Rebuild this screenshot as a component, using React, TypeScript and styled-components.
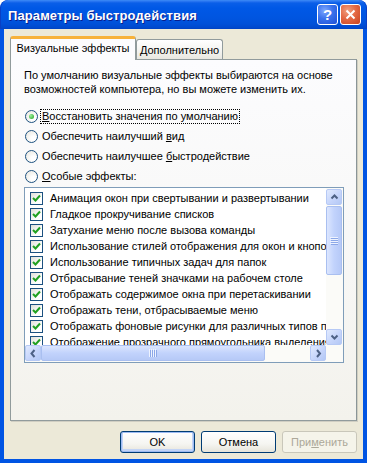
import React from "react";
import styled, { createGlobalStyle } from "styled-components";

const Global = createGlobalStyle`
  html, body { margin: 0; padding: 0; background: #ffffff; }
  body { font-family: "Liberation Sans", Arial, sans-serif; font-size: 11px; color: #000; }
`;

const Window = styled.div`
  width: 367px;
  height: 463px;
  display: flex;
  flex-direction: column;
  box-sizing: border-box;
  border-radius: 8px 8px 0 0;
  overflow: hidden;
  background: #0054e3;
`;

const TitleBar = styled.div`
  height: 29px;
  flex: none;
  display: flex;
  align-items: center;
  padding: 0 5px 0 7px;
  box-sizing: border-box;
  background: linear-gradient(
    to bottom,
    #3d8df5 0px,
    #2f7af3 1px,
    #0a5fe8 3px,
    #0058e6 8px,
    #0055e0 18px,
    #0050d8 24px,
    #0048cc 28px,
    #0040c0 29px
  );
  border-left: 1px solid #0a3fc4;
  border-right: 1px solid #0a3fc4;
  border-radius: 8px 8px 0 0;
`;

const Title = styled.div`
  flex: 1;
  color: #fff;
  font-family: "Liberation Sans", Arial, sans-serif;
  font-weight: bold;
  font-size: 13px;
  letter-spacing: 0.1px;
  text-shadow: 1px 1px 0 #0a1e8c;
  padding-top: 1px;
`;

const CaptionButton = styled.div<{ $kind: "help" | "close" }>`
  width: 21px;
  height: 21px;
  box-sizing: border-box;
  margin-left: 2px;
  border: 1px solid #fff;
  border-radius: 3px;
  display: flex;
  align-items: center;
  justify-content: center;
  background: ${(p) =>
    p.$kind === "close"
      ? "radial-gradient(circle at 35% 30%, #f0a080 0%, #e46a45 45%, #c8421f 100%)"
      : "radial-gradient(circle at 35% 30%, #7fa8ff 0%, #3a72ec 45%, #1e4fd6 100%)"};
  color: #fff;
  font-weight: bold;
  font-size: 15px;
`;

const Body = styled.div`
  flex: 1;
  display: flex;
  flex-direction: column;
  background: #ece9d8;
  margin: 0 4px 4px 4px;
  padding: 7px 6px 0 6px;
  box-sizing: border-box;
`;

const TabStrip = styled.div`
  display: flex;
  align-items: flex-end;
  height: 23px;
  position: relative;
  z-index: 2;
`;

const Tab = styled.div<{ $active?: boolean }>`
  box-sizing: border-box;
  font-size: 11px;
  display: flex;
  align-items: center;
  justify-content: center;
  border: 1px solid #919b9c;
  border-bottom: none;
  border-radius: 3px 3px 0 0;
  ${(p) =>
    p.$active
      ? `
    height: 24px;
    margin-bottom: -1px;
    width: 126px;
    background: #fcfcfe;
    border-top: 3px solid #f7b23b;
    padding-bottom: 3px;
  `
      : `
    height: 20px;
    width: 87px;
    background: linear-gradient(to bottom, #ffffff, #f3f3ef 60%, #e8e7e0);
    padding-top: 1px;
  `}
`;

const Panel = styled.div`
  width: 347px;
  height: 362px;
  box-sizing: border-box;
  border: 1px solid #919b9c;
  border-right-color: #8a9597;
  box-shadow: 1px 1px 0 #d0cec2;
  background: linear-gradient(to bottom, #fcfcfe 0%, #f7f7f5 60%, #f3f2ec 100%);
  padding: 8px 0 0 13px;
  display: flex;
  flex-direction: column;
`;

const Desc = styled.div`
  line-height: 14px;
  width: 330px;
  margin-bottom: 10px;
`;

const RadioRow = styled.div`
  height: 20px;
  display: flex;
  align-items: center;
  padding-left: 1px;
`;

const RadioCircle = styled.span<{ $checked?: boolean }>`
  width: 13px;
  height: 13px;
  box-sizing: border-box;
  border-radius: 50%;
  border: 1px solid #1c5180;
  background: radial-gradient(circle at 70% 70%, #ffffff 20%, #e6e5dc 100%);
  display: inline-flex;
  align-items: center;
  justify-content: center;
  margin-right: 2px;
  flex: none;
  &::after {
    content: "";
    display: ${(p) => (p.$checked ? "block" : "none")};
    width: 5px;
    height: 5px;
    border-radius: 50%;
    background: radial-gradient(circle at 35% 35%, #9cf09c, #21a121);
  }
`;

const Label = styled.span<{ $focus?: boolean }>`
  padding: 0 1px;
  border: 1px ${(p) => (p.$focus ? "dotted #000" : "solid transparent")};
  line-height: 13px;
`;

const U = styled.span`
  text-decoration: underline;
`;

const ListBox = styled.div`
  margin-top: 1px;
  width: 320px;
  height: 176px;
  box-sizing: border-box;
  border: 1px solid #7f9db9;
  background: #fff;
  display: grid;
  grid-template-columns: 1fr 17px;
  grid-template-rows: 1fr 17px;
`;

const Items = styled.div`
  overflow: hidden;
  padding: 2px 0 0 5px;
`;

const Item = styled.div`
  height: 16px;
  display: flex;
  align-items: center;
  white-space: nowrap;
`;

const CheckBox = styled.span`
  width: 13px;
  height: 13px;
  box-sizing: border-box;
  border: 1px solid #1c5180;
  background: linear-gradient(135deg, #e0e0d8, #ffffff 70%);
  margin-right: 7px;
  display: inline-flex;
  align-items: center;
  justify-content: center;
  flex: none;
`;

const VScroll = styled.div`
  display: flex;
  flex-direction: column;
  background: #fbfbf8;
  padding-top: 1px;
`;

const HScroll = styled.div`
  display: flex;
  background: #fbfbf8;
`;

const Corner = styled.div`
  background: #fbfbf8;
`;

const ArrowBtn = styled.div`
  width: 16px;
  height: 16px;
  box-sizing: border-box;
  border: 1px solid #b6c9f5;
  border-radius: 2px;
  background: linear-gradient(135deg, #e1eafe 0%, #c6d5fb 55%, #b3c8f5 100%);
  display: flex;
  align-items: center;
  justify-content: center;
  flex: none;
`;

const Thumb = styled.div<{ $horizontal?: boolean }>`
  box-sizing: border-box;
  border: 1px solid #a9bff0;
  border-radius: 2px;
  display: flex;
  align-items: center;
  justify-content: center;
  ${(p) =>
    p.$horizontal
      ? `width: 224px; height: 16px; background: linear-gradient(to bottom, #dce6fe, #c2d3fc 50%, #b6c9f7);`
      : `width: 16px; height: 69px; margin-top: 1px; background: linear-gradient(to right, #dce6fe, #c2d3fc 50%, #b6c9f7);`}
`;

const Spacer = styled.div`
  flex: 1;
`;

const ButtonRow = styled.div`
  display: flex;
  justify-content: flex-end;
  gap: 6px;
  margin-top: 10px;
`;

const Button = styled.div<{ $default?: boolean; $disabled?: boolean }>`
  width: 75px;
  height: 22px;
  box-sizing: border-box;
  border-radius: 3px;
  display: flex;
  align-items: center;
  justify-content: center;
  font-size: 11px;
  border: 1px solid ${(p) => (p.$disabled ? "#c9c7ba" : "#003c74")};
  color: ${(p) => (p.$disabled ? "#aca899" : "#000")};
  background: ${(p) =>
    p.$disabled
      ? "#f5f4ea"
      : "linear-gradient(to bottom, #ffffff 0%, #f5f5f1 60%, #e6e4da 100%)"};
  box-shadow: ${(p) =>
    p.$default ? "inset 0 0 0 1px #9dbbf3, inset 0 -1px 0 2px #c3d4f5" : "none"};
`;

const Check = () => (
  <svg width="9" height="9" viewBox="0 0 9 9">
    <path d="M1 4 L3.5 6.5 L8 1.5" stroke="#21a121" strokeWidth="2" fill="none" />
  </svg>
);

const Chevron = ({ dir }: { dir: "up" | "down" | "left" | "right" }) => {
  const d = {
    up: "M1.5 5.5 L4.5 2.5 L7.5 5.5",
    down: "M1.5 2.5 L4.5 5.5 L7.5 2.5",
    left: "M5.5 1 L2.5 4.5 L5.5 8",
    right: "M3 1 L6 4.5 L3 8",
  }[dir];
  return (
    <svg width="9" height="9" viewBox="0 0 9 9">
      <path d={d} stroke="#4d6185" strokeWidth="2" fill="none" />
    </svg>
  );
};

const Grip = ({ horizontal }: { horizontal?: boolean }) =>
  horizontal ? (
    <svg width="8" height="8" viewBox="0 0 8 8">
      {[0, 2, 4, 6].map((x) => (
        <rect key={x} x={x} y={0} width={1} height={8} fill="#eef3ff" />
      ))}
      {[1, 3, 5, 7].map((x) => (
        <rect key={x} x={x} y={1} width={1} height={7} fill="#8ca8e8" />
      ))}
    </svg>
  ) : (
    <svg width="8" height="8" viewBox="0 0 8 8">
      {[0, 2, 4, 6].map((y) => (
        <rect key={y} x={0} y={y} width={8} height={1} fill="#eef3ff" />
      ))}
      {[1, 3, 5, 7].map((y) => (
        <rect key={y} x={1} y={y} width={7} height={1} fill="#8ca8e8" />
      ))}
    </svg>
  );

const items = [
  "Анимация окон при свертывании и развертывании",
  "Гладкое прокручивание списков",
  "Затухание меню после вызова команды",
  "Использование стилей отображения для окон и кнопок",
  "Использование типичных задач для папок",
  "Отбрасывание теней значками на рабочем столе",
  "Отображать содержимое окна при перетаскивании",
  "Отображать тени, отбрасываемые меню",
  "Отображать фоновые рисунки для различных типов папок",
  "Отображение прозрачного прямоугольника выделения",
];

export default function App() {
  return (
    <>
      <Global />
      <Window>
        <TitleBar>
          <Title>Параметры быстродействия</Title>
          <CaptionButton $kind="help">?</CaptionButton>
          <CaptionButton $kind="close">
            <svg width="11" height="11" viewBox="0 0 11 11">
              <path d="M1.5 1.5 L9.5 9.5 M9.5 1.5 L1.5 9.5" stroke="#fff" strokeWidth="2" />
            </svg>
          </CaptionButton>
        </TitleBar>
        <Body>
          <TabStrip>
            <Tab $active>Визуальные эффекты</Tab>
            <Tab>Дополнительно</Tab>
          </TabStrip>
          <Panel>
            <Desc>
              По умолчанию визуальные эффекты выбираются на основе
              <br />
              возможностей компьютера, но вы можете изменить их.
            </Desc>
            <RadioRow>
              <RadioCircle $checked />
              <Label $focus>
                <U>В</U>осстановить значения по умолчанию
              </Label>
            </RadioRow>
            <RadioRow>
              <RadioCircle />
              <Label>
                Обеспечить наилучший <U>в</U>ид
              </Label>
            </RadioRow>
            <RadioRow>
              <RadioCircle />
              <Label>
                Обеспечить наилучшее <U>б</U>ыстродействие
              </Label>
            </RadioRow>
            <RadioRow>
              <RadioCircle />
              <Label>
                <U>О</U>собые эффекты:
              </Label>
            </RadioRow>
            <ListBox>
              <Items>
                {items.map((t) => (
                  <Item key={t}>
                    <CheckBox>
                      <Check />
                    </CheckBox>
                    {t}
                  </Item>
                ))}
              </Items>
              <VScroll>
                <ArrowBtn>
                  <Chevron dir="up" />
                </ArrowBtn>
                <Thumb>
                  <Grip />
                </Thumb>
                <Spacer />
                <ArrowBtn>
                  <Chevron dir="down" />
                </ArrowBtn>
              </VScroll>
              <HScroll>
                <ArrowBtn>
                  <Chevron dir="left" />
                </ArrowBtn>
                <Thumb $horizontal>
                  <Grip horizontal />
                </Thumb>
                <Spacer />
                <ArrowBtn>
                  <Chevron dir="right" />
                </ArrowBtn>
              </HScroll>
              <Corner />
            </ListBox>
          </Panel>
          <ButtonRow>
            <Button $default>OK</Button>
            <Button>Отмена</Button>
            <Button $disabled>
              При<U>м</U>енить
            </Button>
          </ButtonRow>
        </Body>
      </Window>
    </>
  );
}
